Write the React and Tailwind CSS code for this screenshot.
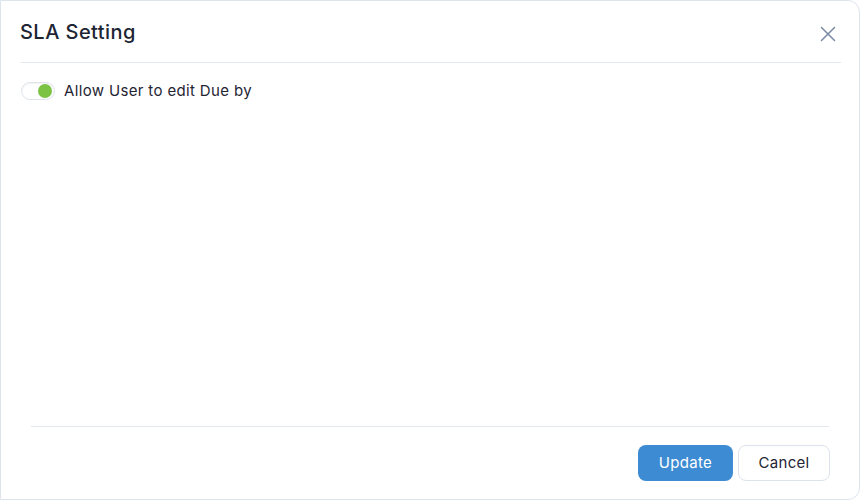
import React, { useState } from 'react';
import { X } from 'lucide-react';

const Toggle = ({ checked, onChange }) => (
    <button
        type="button"
        onClick={() => onChange(!checked)}
        className="relative w-[34px] h-[18px] rounded-full border border-[#dfe4ea] bg-white shadow-[inset_0_1px_2px_rgba(0,0,0,0.06)]"
    >
        <span
            className={`absolute top-[1px] w-[14px] h-[14px] rounded-full transition-all ${checked ? 'left-[16px] bg-[#7cc243]' : 'left-[2px] bg-[#c8cfd8]'}`}
        />
    </button>
);

const App = () => {
    const [allowEdit, setAllowEdit] = useState(true);

    return (
        <div className="w-[860px] h-[500px] overflow-hidden bg-white" style={{ fontFamily: 'Inter, "Noto Sans", sans-serif' }}>
            <div className="w-[860px] h-[500px] flex flex-col bg-white border border-[#dde4ee] rounded-r-[12px]">
                <div className="flex items-center justify-between pl-[19px] pr-[18px] h-[61px]">
                    <h2 className="text-[20px] font-medium text-[#1d2433] tracking-[0.45px]">SLA Setting</h2>
                    <X className="text-[#7b8ca3] mt-[4px]" size={26} strokeWidth={1.4} />
                </div>
                <div className="mx-[20px] mr-[18px] border-t border-[#e3e8ef]" />

                <div className="flex-1 px-[20px] pt-[17px]">
                    <div className="flex items-center gap-[9px]">
                        <Toggle checked={allowEdit} onChange={setAllowEdit} />
                        <span className="text-[15px] text-[#1f2533] tracking-[0.35px]">Allow User to edit Due by</span>
                    </div>
                </div>

                <div className="mx-[30px] border-t border-[#e3e8ef]" />
                <div className="flex justify-end gap-[5px] px-[29px] pt-[18px] pb-[18px]">
                    <button className="w-[95px] h-[36px] rounded-[8px] bg-[#3d8bd3] text-white text-[15px] tracking-[0.3px]">Update</button>
                    <button className="w-[92px] h-[36px] rounded-[8px] border border-[#dde3ec] bg-white text-[#1f2533] text-[15px] tracking-[0.3px]">Cancel</button>
                </div>
            </div>
        </div>
    );
};

export default App;
